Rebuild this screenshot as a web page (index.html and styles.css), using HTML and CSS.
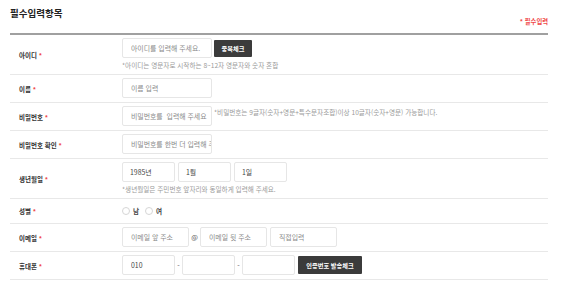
FILE: index.html
```html
<!DOCTYPE html>
<html lang="ko">
<head>
<meta charset="utf-8">
<title>필수입력항목</title>
<link rel="stylesheet" href="styles.css">
</head>
<body>
<div class="wrap">
  <div class="head">
    <h2 class="title">필수입력항목</h2>
    <span class="req-note"><span class="star">*</span> 필수입력</span>
  </div>

  <div class="row">
    <div class="label">아이디 <span class="star">*</span></div>
    <div class="field">
      <div class="line">
        <input class="inp w90" type="text" placeholder="아이디를 입력해 주세요.">
        <button class="btn" type="button">중복체크</button>
      </div>
      <p class="hint">*아이디는 영문자로 시작하는 8~12자 영문자와 숫자 혼합</p>
    </div>
  </div>

  <div class="row">
    <div class="label">이름 <span class="star">*</span></div>
    <div class="field">
      <div class="line"><input class="inp w90" type="text" placeholder="이름 입력"></div>
    </div>
  </div>

  <div class="row">
    <div class="label">비밀번호 <span class="star">*</span></div>
    <div class="field">
      <div class="line top">
        <input class="inp w90" type="password" placeholder="비밀번호를  입력해 주세요">
        <p class="hint side">*비밀번호는 9글자(숫자+영문+특수문자조합)이상 10글자(숫자+영문) 가능합니다.</p>
      </div>
    </div>
  </div>

  <div class="row">
    <div class="label">비밀번호 확인 <span class="star">*</span></div>
    <div class="field">
      <div class="line"><input class="inp w90" type="password" placeholder="비밀번호를 한번 더 입력해 주세요"></div>
    </div>
  </div>

  <div class="row">
    <div class="label">생년월일 <span class="star">*</span></div>
    <div class="field">
      <div class="line gap3">
        <select class="inp sel w53"><option>1985년</option></select>
        <select class="inp sel w53"><option>1월</option></select>
        <select class="inp sel w53"><option>1일</option></select>
      </div>
      <p class="hint">*생년월일은 주민번호 앞자리와 동일하게 입력해 주세요.</p>
    </div>
  </div>

  <div class="row short">
    <div class="label">성별 <span class="star">*</span></div>
    <div class="field">
      <div class="line radios">
        <label class="radio"><input type="radio" name="gender"><span class="dot"></span>남</label>
        <label class="radio"><input type="radio" name="gender"><span class="dot"></span>여</label>
      </div>
    </div>
  </div>

  <div class="row">
    <div class="label">이메일 <span class="star">*</span></div>
    <div class="field">
      <div class="line">
        <input class="inp w67" type="text" placeholder="이메일 앞 주소">
        <span class="sep at">@</span>
        <input class="inp w67" type="text" placeholder="이메일 뒷 주소">
        <input class="inp w67 ml3" type="text" placeholder="직접입력">
      </div>
    </div>
  </div>

  <div class="row">
    <div class="label">휴대폰 <span class="star">*</span></div>
    <div class="field">
      <div class="line">
        <input class="inp w53 val" type="text" value="010">
        <span class="sep dash">-</span>
        <input class="inp w53" type="text">
        <span class="sep dash">-</span>
        <input class="inp w53" type="text">
        <button class="btn btn-wide" type="button">인증번호 발송체크</button>
      </div>
    </div>
  </div>
</div>
</body>
</html>
```

FILE: styles.css
```css
* { box-sizing: border-box; }

body {
  margin: 0;
  background: #fff;
  font-family: "Noto Sans CJK KR", "Noto Sans", sans-serif;
  color: #333;
}

.wrap {
  width: 538px;
  margin-left: 10px;
}

.head {
  height: 35px;
  padding-top: 6px;
  display: flex;
  justify-content: space-between;
  align-items: flex-start;
  border-bottom: 2px solid #a0a0a0;
}

.title {
  margin: 0;
  font-size: 9.5px;
  line-height: 14px;
  font-weight: 700;
  color: #222;
}

.req-note {
  margin-top: 11px;
  font-size: 6.3px;
  line-height: 9px;
  font-weight: 700;
  color: #f04848;
}

.star {
  color: #f04848;
  font-weight: 700;
}

.row {
  display: grid;
  grid-template-columns: 112px 1fr;
  align-items: center;
  border-bottom: 1px solid #e8e8e8;
}

.label {
  padding-left: 9px;
  font-size: 6.5px;
  line-height: 10px;
  font-weight: 700;
  color: #333;
}

.field {
  padding: 3px 0 4px;
}

.row.short .field {
  padding: 0;
  height: 24px;
  display: flex;
  align-items: center;
}

.line {
  display: flex;
  align-items: center;
}

.line.top { align-items: flex-start; }
.line.gap3 { gap: 3px; }

.inp {
  height: 20px;
  margin: 0;
  padding: 0 0 0 8px;
  border: 1px solid #e6e6e6;
  border-radius: 2px;
  background: #fff;
  font-family: inherit;
  font-size: 6.9px;
  color: #444;
  outline: none;
}

.inp::placeholder { color: #8a8a8a; opacity: 1; }

.sel {
  -webkit-appearance: none;
  appearance: none;
  padding-left: 7px;
}

.w90 { width: 90px; }
.w67 { width: 67px; }
.w53 { width: 53px; }
.ml3 { margin-left: 3px; }

.btn {
  height: 17px;
  margin-left: 2px;
  padding: 0;
  width: 38px;
  border: 0;
  border-radius: 1px;
  background: #3b3b3b;
  color: #fff;
  font-family: inherit;
  font-size: 6.2px;
  font-weight: 700;
}

.btn-wide {
  width: 64px;
  height: 18px;
  margin-left: 3px;
}

.hint {
  margin: 2px 0 0;
  font-size: 6.6px;
  line-height: 10px;
  color: #9a9a9a;
  white-space: nowrap;
}

.hint.side {
  margin: 1px 0 0 2px;
}

.sep {
  display: inline-flex;
  justify-content: center;
  font-size: 7px;
  color: #555;
}

.at { width: 11px; }
.dash { width: 7px; }

.radios { gap: 6px; }

.radio {
  display: inline-flex;
  align-items: center;
  font-size: 6.6px;
  font-weight: 700;
  color: #444;
}

.radio input {
  position: absolute;
  opacity: 0;
  width: 0;
  height: 0;
  margin: 0;
}

.dot {
  width: 8px;
  height: 8px;
  margin-right: 3px;
  border: 1px solid #d6d6d6;
  border-radius: 50%;
  background: #fff;
}
```
